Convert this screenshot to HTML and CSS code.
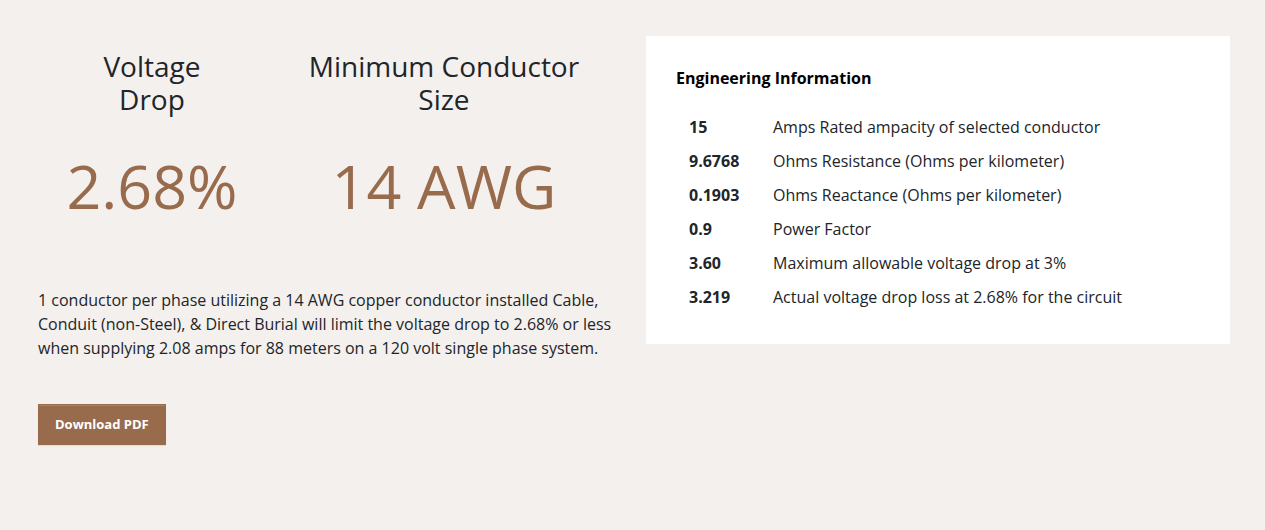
FILE: index.html
```html
<!DOCTYPE html>
<html lang="en">
<head>
<meta charset="utf-8">
<meta name="viewport" content="width=device-width, initial-scale=1">
<title>Voltage Drop Results</title>
<link rel="stylesheet" href="styles.css">
</head>
<body>
<main class="results">
  <section class="summary">
    <div class="figures">
      <div class="figure">
        <h2 class="figure-title">Voltage Drop</h2>
        <p class="figure-value">2.68%</p>
      </div>
      <div class="figure">
        <h2 class="figure-title">Minimum Conductor Size</h2>
        <p class="figure-value">14 AWG</p>
      </div>
    </div>
    <p class="description">1 conductor per phase utilizing a 14 AWG copper conductor installed Cable, Conduit (non-Steel), &amp; Direct Burial will limit the voltage drop to 2.68% or less when supplying 2.08 amps for 88 meters on a 120 volt single phase system.</p>
    <button class="download" type="button">Download PDF</button>
  </section>
  <section class="info">
    <h3 class="info-title" id="info-title">Engineering Information</h3>
    <table class="info-table" aria-labelledby="info-title">
      <tbody>
        <tr><th scope="row">15</th><td>Amps Rated ampacity of selected conductor</td></tr>
        <tr><th scope="row">9.6768</th><td>Ohms Resistance (Ohms per kilometer)</td></tr>
        <tr><th scope="row">0.1903</th><td>Ohms Reactance (Ohms per kilometer)</td></tr>
        <tr><th scope="row">0.9</th><td>Power Factor</td></tr>
        <tr><th scope="row">3.60</th><td>Maximum allowable voltage drop at 3%</td></tr>
        <tr><th scope="row">3.219</th><td>Actual voltage drop loss at 2.68% for the circuit</td></tr>
      </tbody>
    </table>
  </section>
</main>
</body>
</html>
```
FILE: styles.css
```css
* {
  box-sizing: border-box;
}

body {
  margin: 0;
  background: #f4f0ed;
  color: #212529;
  font-family: "Open Sans", sans-serif;
  font-size: 16px;
  line-height: 24px;
}

h2,
h3,
p {
  margin: 0;
}

.results {
  display: grid;
  grid-template-columns: 1fr 1fr;
  gap: 24px;
  align-items: start;
  padding: 36px 35px 36px 38px;
}

.summary {
  padding-top: 14px;
}

.figures {
  display: grid;
  grid-template-columns: 16fr 25fr;
  margin-bottom: 64px;
  text-align: center;
}

.figure-title {
  margin-bottom: 32px;
  padding: 0 32px;
  font-size: 28px;
  font-weight: 500;
  line-height: 33px;
}

.figure-value {
  color: #996b4d;
  font-size: 61px;
  line-height: 76px;
}

.description {
  margin-bottom: 44px;
}

.download {
  padding: 10px 16px;
  border: 1px solid #996b4d;
  background: #996b4d;
  box-shadow: inset 0 1px 0 rgba(255, 255, 255, 0.15), 0 1px 1px rgba(0, 0, 0, 0.08);
  color: #fff;
  font: 700 13px/19px "Open Sans", sans-serif;
}

.info {
  padding: 30px;
  background: #fff;
}

.info-title {
  margin-bottom: 20px;
  color: #000;
  font-size: 16px;
  font-weight: 700;
}

.info-table {
  border-collapse: collapse;
}

.info-table th,
.info-table td {
  padding: 5px 13px;
  text-align: left;
}

.info-table th {
  width: 84px;
}
```
